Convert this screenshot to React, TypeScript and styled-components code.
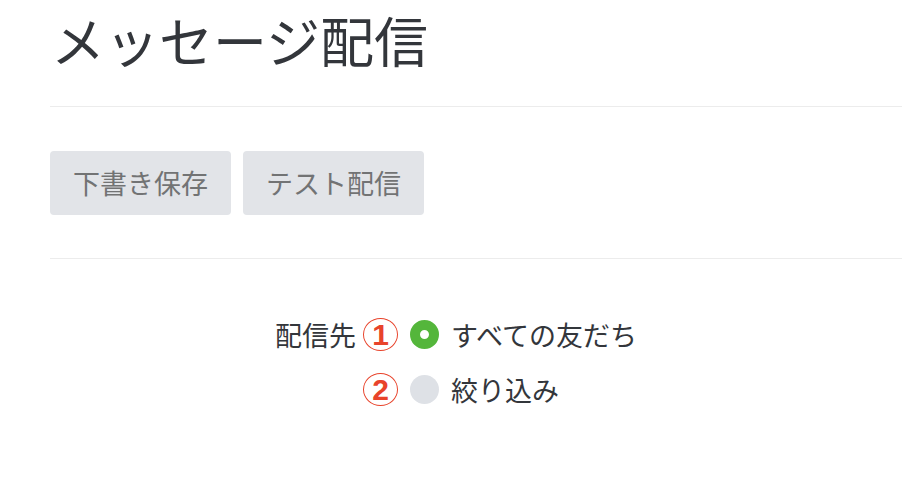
import styled, { createGlobalStyle } from "styled-components";

const GlobalStyle = createGlobalStyle`
  body {
    margin: 0;
    background: #ffffff;
    font-family: "Noto Sans CJK JP", "Noto Sans", sans-serif;
    color: #33363b;
  }
`;

const Page = styled.div`
  padding-left: 50px;
  width: 852px;
`;

const Title = styled.h1`
  margin: 0;
  padding: 6px 0 0 1px;
  height: 106px;
  box-sizing: border-box;
  font-size: 54px;
  font-weight: 400;
  line-height: 68px;
  color: #33363b;
`;

const Divider = styled.hr`
  margin: 0;
  border: none;
  border-top: 1px solid #ececec;
`;

const Toolbar = styled.div`
  display: flex;
  gap: 12px;
  padding: 44px 0 43px;
`;

const Button = styled.button`
  height: 64px;
  padding: 0 23px;
  border: none;
  border-radius: 4px;
  background: #e2e4e8;
  color: #727374;
  font-family: "Noto Sans CJK JP", sans-serif;
  font-size: 27px;
  line-height: 62px;
`;

const Form = styled.div`
  display: grid;
  grid-template-columns: 301px 35px 29px auto;
  column-gap: 12px;
  row-gap: 22px;
  align-items: center;
  padding-top: 59px;
`;

const FieldLabel = styled.div`
  justify-self: end;
  font-size: 27px;
  line-height: 33px;
  margin-right: -5px;
  color: #33363b;
`;

const Marker = styled.span`
  display: flex;
  align-items: center;
  justify-content: center;
  width: 35px;
  height: 33px;
  box-sizing: border-box;
  border: 1.5px solid #e8432b;
  border-radius: 50%;
  color: #e8432b;
  font-family: "Liberation Sans", sans-serif;
  font-weight: 700;
  font-size: 30px;
  line-height: 1;
`;

const Radio = styled.span<{ $checked?: boolean }>`
  display: block;
  width: 29px;
  height: 29px;
  box-sizing: border-box;
  border-radius: 50%;
  background: ${(p) => (p.$checked ? "#ffffff" : "#dee1e6")};
  border: ${(p) => (p.$checked ? "10px solid #54b63b" : "none")};
`;

const OptionText = styled.span`
  font-size: 27px;
  line-height: 33px;
  color: #33363b;
`;

const options = [
  { label: "すべての友だち", checked: true },
  { label: "絞り込み", checked: false },
];

export default function App() {
  return (
    <>
      <GlobalStyle />
      <Page>
        <Title>メッセージ配信</Title>
        <Divider />
        <Toolbar>
          <Button>下書き保存</Button>
          <Button>テスト配信</Button>
        </Toolbar>
        <Divider />
        <Form>
          {options.map((o, i) => [
            <FieldLabel key={`l${i}`}>{i === 0 ? "配信先" : ""}</FieldLabel>,
            <Marker key={`m${i}`}>{i + 1}</Marker>,
            <Radio key={`r${i}`} $checked={o.checked} />,
            <OptionText key={`t${i}`}>{o.label}</OptionText>,
          ])}
        </Form>
      </Page>
    </>
  );
}
